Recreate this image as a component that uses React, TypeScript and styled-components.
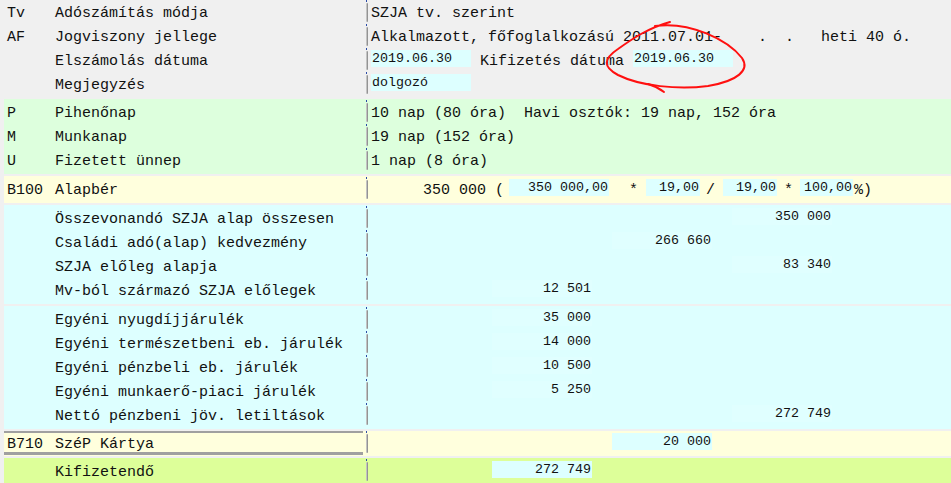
import React from 'react';
import styled, { createGlobalStyle, css } from 'styled-components';

const GlobalStyle = createGlobalStyle`
  html, body {
    margin: 0;
    background: #f0f0f0;
  }
`;

const bg = {
  plain: 'transparent',
  green: '#ddffdd',
  yellow: '#ffffdd',
  cyan: '#ddffff',
  lime: '#ddff99',
};

const Page = styled.div`
  position: relative;
  box-sizing: border-box;
  width: 951px;
  height: 483px;
  overflow: hidden;
  padding-left: 4px;
  display: flex;
  flex-direction: column;
  gap: 2px;
  font-family: 'Liberation Mono', 'Courier New', monospace;
  font-size: 15px;
  color: #111;
`;

const Section = styled.div<{ $bg: string; $pad?: string }>`
  background: ${(p) => p.$bg};
  padding: ${(p) => p.$pad ?? '1px 0 2px'};
`;

const Row = styled.div`
  display: flex;
  height: 24px;
`;

const Head = styled.div<{ $selected?: boolean }>`
  box-sizing: border-box;
  flex: 0 0 359px;
  display: flex;
  padding: 5px 0 0 3px;
  line-height: 18px;
  white-space: pre;
  ${(p) =>
    p.$selected &&
    css`
      border-top: 2px solid #a0a0a0;
      border-bottom: 3px solid #a0a0a0;
      padding-top: 3px;
    `}
`;

const Code = styled.span`
  flex: 0 0 48px;
`;

const Label = styled.span`
  flex: 1;
`;

const Grip = styled.div`
  box-sizing: border-box;
  flex: 0 0 8px;
  padding-left: 3px;
  &::before {
    content: '';
    display: block;
    width: 1px;
    height: 2px;
    background: #2a4aa8;
  }
  &::after {
    content: '';
    display: block;
    width: 2px;
    height: 19px;
    margin-top: 1px;
    border-radius: 1px;
    background: linear-gradient(to right, #dadada, #7c7c7c);
  }
`;

const Value = styled.div`
  flex: 1;
  display: flex;
  align-items: flex-start;
  padding-top: 5px;
  line-height: 18px;
  white-space: pre;
  min-width: 0;
`;

const Field = styled.span<{ $w?: number; $right?: boolean; $bg?: string }>`
  display: inline-block;
  box-sizing: border-box;
  width: ${(p) => p.$w ?? 100}px;
  height: 17px;
  line-height: 18px;
  margin-top: -3px;
  padding: 0 1px;
  font-size: 13.33px;
  text-align: ${(p) => (p.$right ? 'right' : 'left')};
  background: ${(p) => p.$bg ?? '#ddffff'};
  overflow: hidden;
`;

const Between = styled.span`
  display: inline-block;
`;

const Lead = styled.span`
  display: inline-block;
  width: 115px;
  text-align: right;
`;

const Op = styled.span<{ $l: number; $r: number }>`
  display: inline-block;
  margin: 0 ${(p) => p.$r}px 0 ${(p) => p.$l}px;
`;

const Amounts = styled.div`
  display: grid;
  grid-template-columns: repeat(3, 100px);
  column-gap: 20px;
  padding-left: 121px;
`;

const Amount = styled(Field)<{ $col: number }>`
  grid-column: ${(p) => p.$col};
  grid-row: 1;
`;

const Scribble = styled.svg`
  position: absolute;
  left: 0;
  top: 0;
  pointer-events: none;
`;

type LineProps = {
  code?: string;
  label?: string;
  selected?: boolean;
  children?: React.ReactNode;
};

const Line: React.FC<LineProps> = ({ code = '', label = '', selected, children }) => (
  <Row>
    <Head $selected={selected}>
      <Code>{code}</Code>
      <Label>{label}</Label>
    </Head>
    <Grip />
    <Value>{children}</Value>
  </Row>
);

type AmountLineProps = {
  label: string;
  col: number;
  amount: string;
  box?: string;
  code?: string;
  selected?: boolean;
};

const AmountLine: React.FC<AmountLineProps> = ({ label, col, amount, box = '#e0ffff', code, selected }) => (
  <Line code={code} label={label} selected={selected}>
    <Amounts>
      <Amount $col={col} $right $bg={box}>
        {amount}
      </Amount>
    </Amounts>
  </Line>
);

export default function App() {
  return (
    <>
      <GlobalStyle />
      <Page>
        <Section $bg={bg.plain} $pad="0 0 1px">
          <Line code="Tv" label="Adószámítás módja">
            SZJA tv. szerint
          </Line>
          <Line code="AF" label="Jogviszony jellege">
            {'Alkalmazott, főfoglalkozású 2011.07.01-    .  .   heti 40 ó.'}
          </Line>
          <Line label="Elszámolás dátuma">
            <Field>2019.06.30</Field>
            <Between>{' Kifizetés dátuma '}</Between>
            <Field>2019.06.30</Field>
          </Line>
          <Line label="Megjegyzés">
            <Field>dolgozó</Field>
          </Line>
        </Section>

        <Section $bg={bg.green}>
          <Line code="P" label="Pihenőnap">
            {'10 nap (80 óra)  Havi osztók: 19 nap, 152 óra'}
          </Line>
          <Line code="M" label="Munkanap">
            19 nap (152 óra)
          </Line>
          <Line code="U" label="Fizetett ünnep">
            1 nap (8 óra)
          </Line>
        </Section>

        <Section $bg={bg.yellow}>
          <Line code="B100" label="Alapbér">
            <Lead>350 000</Lead>
            <Op $l={9} $r={5}>(</Op>
            <Field $right>350 000,00</Field>
            <Op $l={20} $r={8}>*</Op>
            <Field $right $w={54}>19,00</Field>
            <Op $l={6} $r={8}>/</Op>
            <Field $right $w={54}>19,00</Field>
            <Op $l={7} $r={7}>*</Op>
            <Field $right $w={53}>100,00</Field>
            <Op $l={1} $r={0}>%)</Op>
          </Line>
        </Section>

        <Section $bg={bg.cyan}>
          <AmountLine label="Összevonandó SZJA alap összesen" col={3} amount="350 000" />
          <AmountLine label="Családi adó(alap) kedvezmény" col={2} amount="266 660" />
          <AmountLine label="SZJA előleg alapja" col={3} amount="83 340" />
          <AmountLine label="Mv-ból származó SZJA előlegek" col={1} amount="12 501" />
        </Section>

        <Section $bg={bg.cyan}>
          <AmountLine label="Egyéni nyugdíjjárulék" col={1} amount="35 000" />
          <AmountLine label="Egyéni természetbeni eb. járulék" col={1} amount="14 000" />
          <AmountLine label="Egyéni pénzbeli eb. járulék" col={1} amount="10 500" />
          <AmountLine label="Egyéni munkaerő-piaci járulék" col={1} amount="5 250" />
          <AmountLine label="Nettó pénzbeni jöv. letiltások" col={3} amount="272 749" />
        </Section>

        <Section $bg={bg.yellow} $pad="0 0 1px">
          <AmountLine code="B710" label="SzéP Kártya" col={2} amount="20 000" box="#ddffff" selected />
        </Section>

        <Section $bg={bg.lime}>
          <AmountLine label="Kifizetendő" col={1} amount="272 749" box="#ddffff" />
        </Section>

        <Scribble width="951" height="483" viewBox="0 0 951 483">
          <path
            d="M 655 26 C 690 21, 728 40, 742 58 C 750 70, 738 81, 708 86 C 678 90, 640 86, 618 75 C 603 67, 603 59, 618 49 C 632 39, 648 28, 670 22"
            stroke="#ff1010"
            strokeWidth="2"
            fill="none"
            strokeLinecap="round"
          />
          <path d="M 648 84 C 655 86, 660 89, 664 92" stroke="#ff1010" strokeWidth="2" fill="none" strokeLinecap="round" />
        </Scribble>
      </Page>
    </>
  );
}
